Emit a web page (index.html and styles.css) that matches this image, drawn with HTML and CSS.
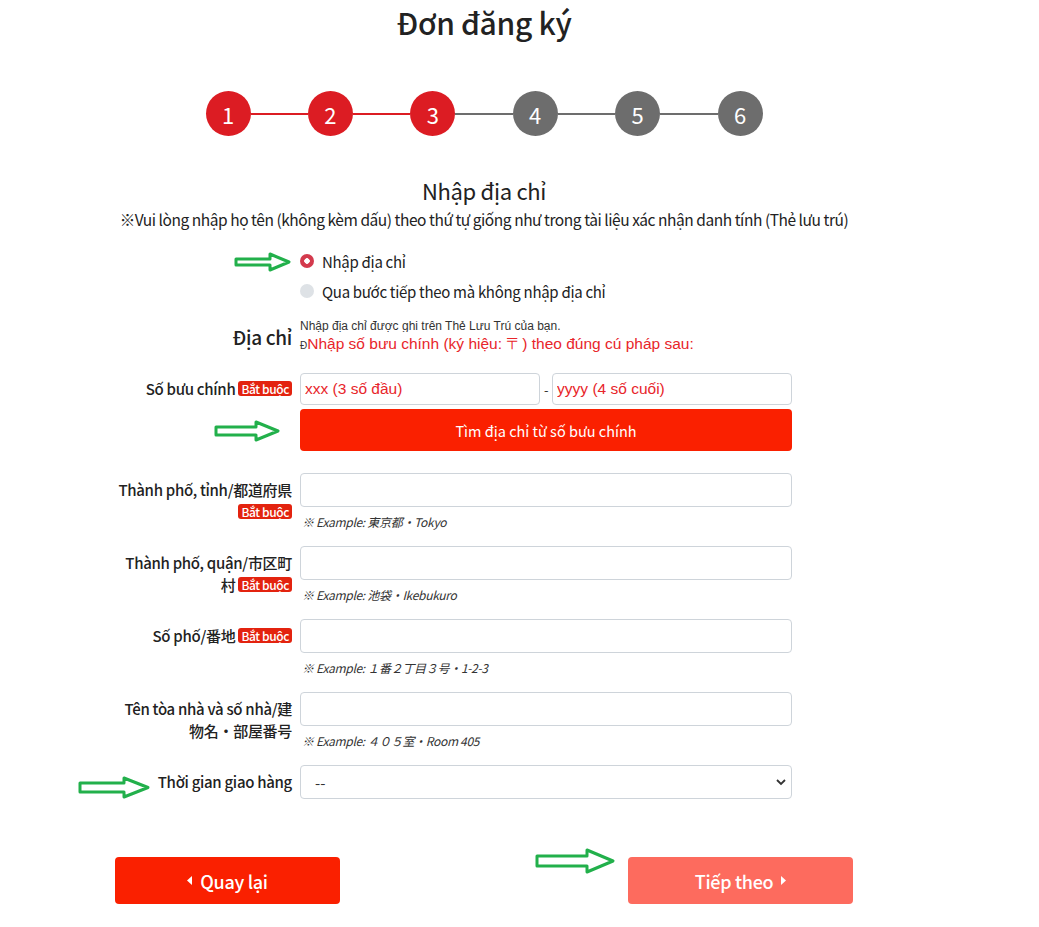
FILE: index.html
```html
<!DOCTYPE html>
<html lang="vi">
<head>
<meta charset="UTF-8">
<meta name="viewport" content="width=device-width, initial-scale=1.0">
<title>Đơn đăng ký</title>
<link rel="stylesheet" href="styles.css">
</head>
<body>
  <div class="page">
    <h1 class="title">Đơn đăng ký</h1>

    <div class="steps">
      <span class="step done">1</span>
      <span class="step-line done"></span>
      <span class="step done">2</span>
      <span class="step-line done"></span>
      <span class="step done">3</span>
      <span class="step-line"></span>
      <span class="step">4</span>
      <span class="step-line"></span>
      <span class="step">5</span>
      <span class="step-line"></span>
      <span class="step">6</span>
    </div>

    <h2 class="section-title">Nhập địa chỉ</h2>
    <p class="note">※Vui lòng nhập họ tên (không kèm dấu) theo thứ tự giống như trong tài liệu xác nhận danh tính (Thẻ lưu trú)</p>

    <div class="choices">
      <label class="choice">
        <input type="radio" name="addrMode" checked>
        <span>Nhập địa chỉ</span>
      </label>
      <label class="choice">
        <input type="radio" name="addrMode">
        <span>Qua bước tiếp theo mà không nhập địa chỉ</span>
      </label>
    </div>

    <div class="address-head">
      <div class="address-label">Địa chỉ</div>
      <div class="address-info">
        <p class="hint">Nhập địa chỉ được ghi trên Thẻ Lưu Trú của bạn.</p>
        <p class="hint-red"><small>Đ</small>Nhập số bưu chính (ký hiệu: 〒) theo đúng cú pháp sau:</p>
      </div>
    </div>

    <form class="address-form" onsubmit="event.preventDefault()">
      <div class="row row-zip">
        <label class="field-label">Số bưu chính <span class="badge">Bắt buộc</span></label>
        <div class="field">
          <div class="zip">
            <input type="text" placeholder="xxx (3 số đầu)">
            <span class="dash">-</span>
            <input type="text" placeholder="yyyy (4 số cuối)">
          </div>
          <button type="button" class="btn-search">Tìm địa chỉ từ số bưu chính</button>
        </div>
      </div>

      <div class="row">
        <label class="field-label">Thành phố, tỉnh/都道府県 <span class="badge">Bắt buộc</span></label>
        <div class="field">
          <input type="text">
          <p class="example">※ Example: 東京都・Tokyo</p>
        </div>
      </div>

      <div class="row">
        <label class="field-label">Thành phố, quận/市区町村 <span class="badge">Bắt buộc</span></label>
        <div class="field">
          <input type="text">
          <p class="example">※ Example: 池袋・Ikebukuro</p>
        </div>
      </div>

      <div class="row">
        <label class="field-label">Số phố/番地 <span class="badge">Bắt buộc</span></label>
        <div class="field">
          <input type="text">
          <p class="example">※ Example: １番２丁目３号・1-2-3</p>
        </div>
      </div>

      <div class="row">
        <label class="field-label">Tên tòa nhà và số nhà/建物名・部屋番号</label>
        <div class="field">
          <input type="text">
          <p class="example">※ Example: ４０５室・Room 405</p>
        </div>
      </div>

      <div class="row row-last">
        <label class="field-label">Thời gian giao hàng</label>
        <div class="field select-wrap">
          <select>
            <option>--</option>
          </select>
          <svg class="chevron" width="10" height="7" viewBox="0 0 10 7"><path d="M1 1l4 4 4-4" fill="none" stroke="#333" stroke-width="1.8"/></svg>
        </div>
      </div>
    </form>

    <div class="actions">
      <button type="button" class="btn-back">
        <svg width="5" height="9" viewBox="0 0 5 9"><path d="M5 0v9L0 4.5z" fill="#fff"/></svg>
        Quay lại
      </button>
      <button type="button" class="btn-next">
        Tiếp theo
        <svg width="5" height="9" viewBox="0 0 5 9"><path d="M0 0v9l5-4.5z" fill="#fff"/></svg>
      </button>
    </div>
  </div>

  <!-- green pointer arrows -->
  <svg class="pointer p1" width="58" height="20" viewBox="0 0 58 20"><path d="M2 7h34V2l19 8-19 8v-5H2z" fill="#fff" stroke="#22b04b" stroke-width="3" stroke-linejoin="round"/></svg>
  <svg class="pointer p2" width="66" height="22" viewBox="0 0 66 22"><path d="M2 7h40V2l22 9-22 9v-5H2z" fill="#fff" stroke="#22b04b" stroke-width="3" stroke-linejoin="round"/></svg>
  <svg class="pointer p3" width="72" height="23" viewBox="0 0 72 23"><path d="M2 7h44V2l24 9.5-24 9.5v-5H2z" fill="#fff" stroke="#22b04b" stroke-width="3" stroke-linejoin="round"/></svg>
  <svg class="pointer p4" width="80" height="26" viewBox="0 0 80 26"><path d="M2 8h50V2l26 11-26 11v-6H2z" fill="#fff" stroke="#22b04b" stroke-width="3" stroke-linejoin="round"/></svg>
</body>
</html>
```

FILE: styles.css
```css
body {
  margin: 0;
  font-family: "Noto Sans CJK JP", "Noto Sans", sans-serif;
  letter-spacing: -0.3px;
  color: #222;
  background: #fff;
  position: relative;
}

.page {
  width: 738px;
  margin-left: 115px;
  padding-bottom: 22px;
}

.title {
  margin: 4px 0 0;
  font-size: 30px;
  font-weight: 500;
  line-height: 36px;
  text-align: center;
}

.steps {
  width: 557px;
  margin: 51px auto 0;
  display: flex;
  align-items: center;
}

.step {
  width: 45px;
  height: 45px;
  border-radius: 50%;
  background: #6d6d6d;
  color: #fff;
  font-size: 22px;
  letter-spacing: 0;
  display: flex;
  align-items: center;
  justify-content: center;
  flex-shrink: 0;
}

.step.done {
  background: #dc1c23;
}

.step-line {
  flex: 1;
  height: 2px;
  background: #6d6d6d;
}

.step-line.done {
  background: #dc1c23;
}

.section-title {
  margin: 40px 0 0;
  font-size: 22px;
  font-weight: 400;
  line-height: 29px;
  text-align: center;
}

.note {
  margin: 2px -20px 0;
  font-size: 15.5px;
  letter-spacing: -0.45px;
  line-height: 24px;
  text-align: center;
  white-space: nowrap;
}

.choices {
  margin: 15px 0 0 185px;
}

.choice {
  display: flex;
  align-items: center;
  gap: 8px;
  height: 30px;
  font-size: 15px;
}

.choice input {
  appearance: none;
  margin: 0;
  width: 14px;
  height: 14px;
  border-radius: 50%;
  background: #dee2e6;
}

.choice input:checked {
  background: radial-gradient(circle, #fff 0 2.5px, #d33a4d 3px);
}

.address-head {
  display: flex;
  margin-top: 13px;
}

.address-label {
  width: 177px;
  text-align: right;
  font-size: 19px;
  font-weight: 500;
  line-height: 22px;
  padding-top: 7px;
}

.address-info {
  margin-left: 8px;
}

.hint {
  margin: 0;
  font-family: "Liberation Sans", Arial, sans-serif;
  letter-spacing: 0;
  font-size: 12px;
  line-height: 14px;
  color: #333;
  height: 13px;
  overflow: hidden;
}

.hint-red {
  margin: 2px 0 0;
  font-family: "Liberation Sans", Arial, sans-serif;
  letter-spacing: 0;
  font-size: 15.5px;
  line-height: 20px;
  color: #e8252a;
}

.hint-red small {
  font-size: 10px;
  color: #333;
}

.address-form {
  margin-top: 17px;
}

.row {
  display: grid;
  grid-template-columns: 177px 492px;
  column-gap: 8px;
  margin-bottom: 16px;
}

.row-zip {
  margin-bottom: 22px;
}

.field-label {
  text-align: right;
  font-size: 15px;
  font-weight: 500;
  line-height: 22px;
  padding-top: 6px;
  color: #222;
}

.row-zip .field-label {
  padding-top: 5px;
}

.badge {
  display: inline-block;
  background: #e3230f;
  color: #fff;
  font-size: 12px;
  font-weight: 500;
  line-height: 15px;
  padding: 0 3px;
  border-radius: 3px;
  vertical-align: 1px;
  letter-spacing: -0.4px;
}

.field input,
.field select {
  width: 100%;
  height: 34px;
  box-sizing: border-box;
  border: 1px solid #ced4da;
  border-radius: 4px;
  padding: 4px 12px;
  font-size: 15px;
  font-family: inherit;
  background: #fff;
  margin: 0;
}

.zip {
  display: flex;
  align-items: center;
  gap: 4px;
}

.zip input {
  height: 32px;
  padding: 4px;
  font-family: "Liberation Sans", Arial, sans-serif;
  letter-spacing: 0;
  font-size: 15.5px;
}

.zip input::placeholder {
  color: #e8252a;
}

.dash {
  font-size: 13px;
  color: #333;
}

.btn-search {
  display: block;
  width: 100%;
  height: 42px;
  margin-top: 4px;
  border: none;
  border-radius: 4px;
  background: #fa2000;
  color: #fff;
  font-family: inherit;
  letter-spacing: 0;
  font-size: 14.5px;
}

.example {
  margin: 7px 0 0 2px;
  font-size: 12px;
  line-height: 16px;
  font-style: italic;
  color: #333;
}

.select-wrap {
  position: relative;
}

.select-wrap select {
  appearance: none;
  color: #333;
  padding-left: 14px;
}

.chevron {
  position: absolute;
  right: 6px;
  top: 14px;
  pointer-events: none;
}

.row-last {
  margin-bottom: 0;
}

.actions {
  display: flex;
  justify-content: space-between;
  margin-top: 58px;
}

.actions button {
  width: 225px;
  height: 47px;
  border: none;
  border-radius: 4px;
  color: #fff;
  font-family: inherit;
  letter-spacing: -0.3px;
  font-size: 18px;
  font-weight: 500;
  display: flex;
  align-items: center;
  justify-content: center;
  gap: 8px;
}

.btn-back {
  background: #fa2000;
}

.btn-next {
  background: #fd6b5e;
}

.pointer {
  position: absolute;
}

.p1 { left: 234px; top: 252px; }
.p2 { left: 214px; top: 420px; }
.p3 { left: 78px; top: 776px; }
.p4 { left: 535px; top: 848px; }
```
